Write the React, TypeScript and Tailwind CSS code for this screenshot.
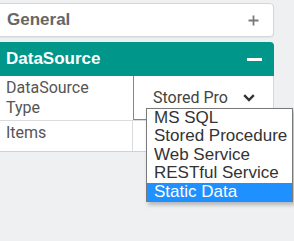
import React from "react";

export default function App() {
  const items = ["MS SQL", "Stored Procedure", "Web Service", "RESTful Service", "Static Data"];
  return (
    <div className="relative w-[294px] h-[241px] overflow-hidden bg-[#eff0f2]">
      <div className="ml-[-4px] w-[278px] pt-[3px]">
        {/* General header */}
        <div className="flex h-[34px] items-center justify-between rounded-[4px] border border-[#d3d7dc] bg-white pl-[10px] pr-[14px] shadow-[0_1px_1px_rgba(0,0,0,0.05)]">
          <span className="text-[17px] font-bold text-[#666] [font-family:'Liberation_Sans',Arial,sans-serif]">General</span>
          <svg width="11" height="11" viewBox="0 0 11 11">
            <path d="M5.5 0.5v10M0.5 5.5h10" stroke="#7a7a7a" strokeWidth="1.8" />
          </svg>
        </div>
        {/* DataSource header */}
        <div className="mt-[5px] flex h-[34px] items-center justify-between rounded-t-[4px] bg-[#00968a] pl-[10px] pr-[12px]">
          <span className="text-[17px] font-bold text-white [font-family:'Liberation_Sans',Arial,sans-serif]">DataSource</span>
          <div className="h-[3px] w-[15px] bg-white" />
        </div>
        {/* Rows */}
        <div className="border-r border-[#d3d7dc] bg-white text-[16px] text-[#555] [font-family:Roboto,sans-serif]">
          <div className="flex h-[45px] border-b border-[#d9dcdf]">
            <div className="w-[137px] shrink-0 pl-[10px] pt-[2px] leading-[20px]">
              DataSource
              <br />
              Type
            </div>
            <div className="flex h-[44px] flex-1 items-center justify-between border-b border-l border-[#7d8896] pl-[19px] pr-[18px] text-[#444]">
              <span>Stored Pro</span>
              <svg width="12" height="8" viewBox="0 0 12 8">
                <path d="M1.2 1.2L6 6L10.8 1.2" fill="none" stroke="#333" strokeWidth="2.4" />
              </svg>
            </div>
          </div>
          <div className="flex h-[31px] border-b border-[#cfd2d6]">
            <div className="w-[137px] shrink-0 border-r border-[#d9dcdf] pl-[10px] pt-[2px] leading-[20px]">Items</div>
            <div className="flex-1" />
          </div>
        </div>
      </div>
      {/* Dropdown list */}
      <div className="absolute left-[146px] top-[108px] w-[147px] border border-[#7a7a7a] bg-white py-[0px] shadow-[2px_3px_4px_rgba(0,0,0,0.25)] [font-family:'Liberation_Sans',Arial,sans-serif]">
        {items.map((it, i) => (
          <div
            key={it}
            className={
              i === 4
                ? "h-[18.4px] whitespace-nowrap bg-[#1e90ff] pl-[7px] text-[17px] leading-[18px] text-white"
                : "h-[18.4px] whitespace-nowrap pl-[7px] text-[17px] leading-[18px] text-[#333]"
            }
          >
            {it}
          </div>
        ))}
      </div>
    </div>
  );
}
